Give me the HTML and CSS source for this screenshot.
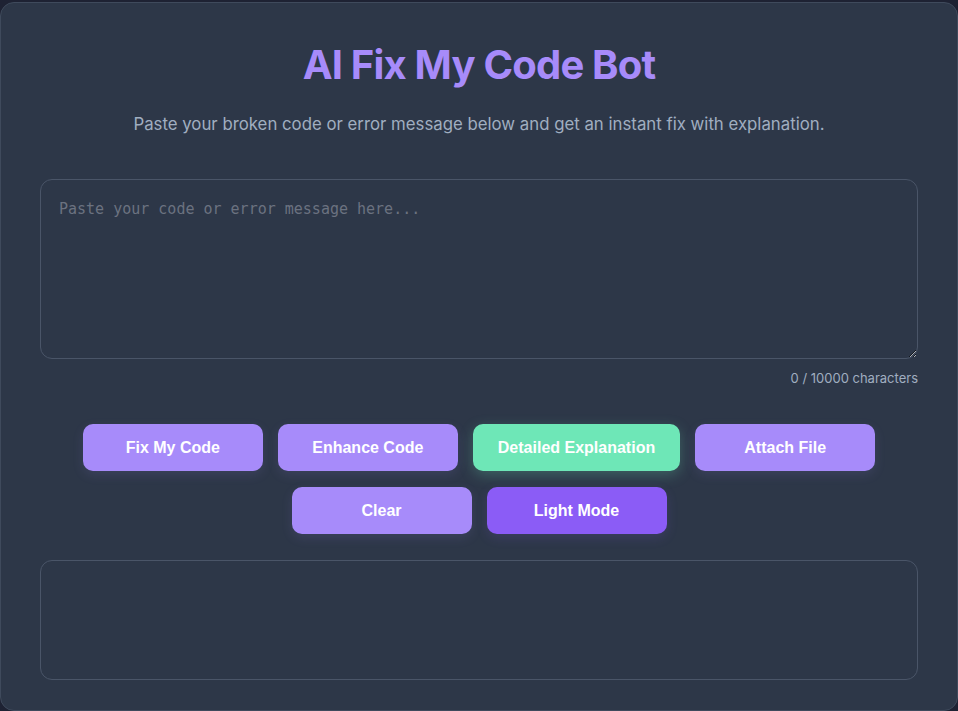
FILE: index.html
```html
<!DOCTYPE html>
<html lang="en">

<head>
    <meta charset="UTF-8">
    <meta name="viewport" content="width=device-width, initial-scale=1.0">
    <link rel="stylesheet" href="styles.css">
    <title>AI Fix My Code Bot</title>
</head>

<body>
<div class="app">
    <h1 class="title">AI Fix My Code Bot</h1>
    <p class="subtitle">Paste your broken code or error message below and get an instant fix with explanation.</p>

    <!-- code input -->
    <textarea class="code-input" placeholder="Paste your code or error message here..."></textarea>
    <div class="counter">0 / 10000 characters</div>

    <!-- actions -->
    <div class="actions">
        <button class="btn">Fix My Code</button>
        <button class="btn">Enhance Code</button>
        <button class="btn btn-green">Detailed Explanation</button>
        <button class="btn">Attach File</button>
        <button class="btn">Clear</button>
        <button class="btn btn-dark">Light Mode</button>
    </div>

    <!-- result -->
    <div class="output"></div>
</div>
</body>

</html>
```

FILE: styles.css
```css
* {
    margin: 0;
    padding: 0;
    box-sizing: border-box;
}

body {
    background: #1e2233;
    padding-top: 2px;
    font-family: Inter, "Noto Sans", sans-serif;
}

.app {
    width: 958px;
    min-height: 708px;
    background: #2d3748;
    border: 1px solid #3f4a5c;
    border-radius: 14px;
    padding: 38px 39px 30px;
}

.title {
    text-align: center;
    font-size: 40px;
    font-weight: 700;
    letter-spacing: -0.8px;
    line-height: 48px;
    color: #a78bfa;
}

.subtitle {
    text-align: center;
    font-size: 16.8px;
    line-height: 20px;
    color: #a0aec0;
    margin-top: 25px;
}

.code-input {
    display: block;
    width: 100%;
    height: 180px;
    margin-top: 45px;
    padding: 18px 18px;
    background: #2d3748;
    border: 1px solid #4a5568;
    border-radius: 12px;
    color: #e2e8f0;
    font-family: "DejaVu Sans Mono", "Liberation Mono", monospace;
    font-size: 15px;
    line-height: 22px;
    resize: vertical;
    outline: none;
}

.code-input::placeholder {
    color: #6b7280;
}

.counter {
    text-align: right;
    font-size: 13px;
    line-height: 16px;
    color: #a0aec0;
    margin-top: 11px;
}

.actions {
    display: flex;
    flex-wrap: wrap;
    justify-content: center;
    gap: 16px 15px;
    margin-top: 38px;
}

.btn {
    min-width: 180px;
    height: 47px;
    padding: 0 25px;
    border: none;
    border-radius: 10px;
    background: #a78bfa;
    color: #fff;
    font-family: "Liberation Sans", Arial, sans-serif;
    font-size: 16px;
    font-weight: 700;
    box-shadow: 0 4px 12px rgba(167, 139, 250, 0.12);
    cursor: pointer;
}

.btn-green {
    background: #6ee7b7;
    box-shadow: 0 4px 14px rgba(110, 231, 183, 0.25);
}

.btn-dark {
    background: #8b5cf6;
    box-shadow: 0 4px 12px rgba(139, 92, 246, 0.15);
}

.output {
    height: 120px;
    margin-top: 26px;
    border: 1px solid #4a5568;
    border-radius: 12px;
}
```
